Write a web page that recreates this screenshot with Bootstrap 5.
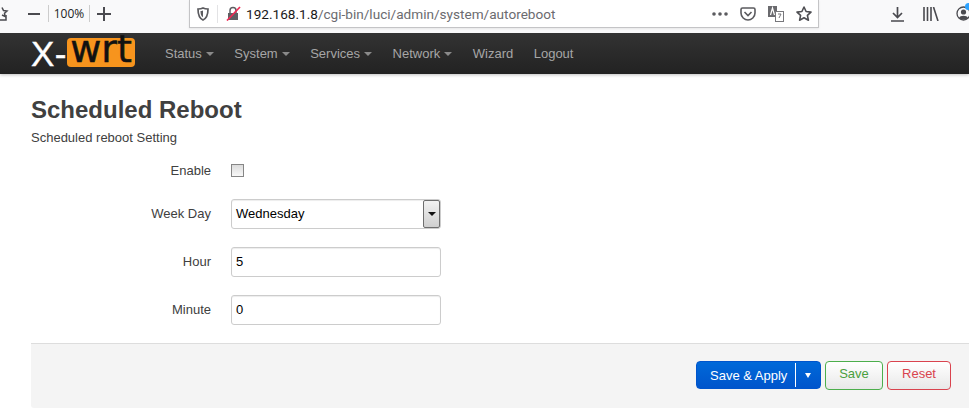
<!DOCTYPE html>
<html lang="en"><head><meta charset="utf-8"><title>Scheduled Reboot</title>
<link href="https://cdn.jsdelivr.net/npm/bootstrap@5.3.0/dist/css/bootstrap.min.css" rel="stylesheet">
<style>
html,body{height:413px;overflow:hidden;background:#fff}
body{font-family:"Liberation Sans",Arial,sans-serif;font-size:13px;color:#404040}
.chrome{height:33px;background:#f9f9fa;position:relative;overflow:visible}
.zoomset{width:189px;padding-left:28px;height:27px;position:relative}
.homeico{position:absolute;left:-3px;top:6px}
.ico{display:block;flex:none;color:#4a4a4f}
.zoomval{font:12px "Open Sans",sans-serif;color:#222;width:42px;height:17px;margin:0 7px 0 8px;text-align:center;line-height:17px;border-left:1px solid #ccc;border-right:1px solid #ccc}
.urlbar{width:630px;height:28px;background:#fff;border:1px solid #c4c4c6;border-top:0;box-shadow:0 1px 2px rgba(0,0,0,.08);padding-left:7px}
.vsep{width:1px;height:18px;background:#e3e3e5;margin:0 8px}
.urltext{font:13.6px Roboto,sans-serif;color:#6b6b6f;white-space:nowrap;margin-left:5px;line-height:28px}
.urltext b{font-weight:400;color:#1a1a1a}
.urltools{margin-right:6px}
.toolside{width:150px;padding-left:72px;height:27px;position:relative}
.notice{position:absolute;right:-3px;top:3px;width:7px;height:7px;border-radius:50%;background:#2ea3ff}
.topbar{height:41px;background:linear-gradient(#333,#222);box-shadow:0 1px 3px rgba(0,0,0,.25);padding-left:31px}
.brandx{font:35px/41px "Liberation Sans",sans-serif;color:#fff;width:36px;white-space:nowrap;-webkit-text-stroke:.4px #fff;letter-spacing:.5px}
.brandw{font:38px/22px "DejaVu Sans",sans-serif;color:#111;background:#f7941d;border-radius:4px;width:68px;height:29px;text-align:center;margin-top:5px;-webkit-text-stroke:.5px #111}
.menu{list-style:none;margin:0 0 0 30px;padding:0;gap:20.5px}
.menu a{color:#a6a6a6;text-decoration:none;font-size:13px;line-height:41px;white-space:nowrap}
.caretx{display:inline-block;width:0;height:0;border:4px solid transparent;border-top-color:#8a8a8a;border-bottom:0;margin-left:4px;vertical-align:2px}
.pagewrap{padding:0 0 0 31px}
.pagetitle{font-size:24px;line-height:30px;font-weight:700;margin:21px 0 0;color:#404040}
.pagedesc{font-size:13px;line-height:18px;margin:4px 0 0}
.frow{display:flex;align-items:center}
.flabel{width:180px;text-align:right;font-size:13px;line-height:18px;margin-bottom:0;color:#404040}
.fctl{margin-left:20px;width:210px}
.r1{height:20px;margin-top:13px}
.r1 .flabel{padding-top:1px}
.r2{margin-top:19px}
.r3,.r4{margin-top:18px}
.chk{width:13px;height:13px;border:1px solid #868686;background:linear-gradient(#dcdcdc,#f8f8f8);display:block;appearance:none}
.inp{display:block;width:210px;height:30px;border:1px solid #ccc;border-radius:3px;padding:0 4px 1px;font:13px "Liberation Sans",sans-serif;color:#000;box-shadow:inset 0 1px 1px rgba(0,0,0,.075);background:#fff;outline:0}
.selbox{width:210px;height:30px;border:1px solid #ccc;border-radius:3px;padding-left:4px;color:#000;box-shadow:inset 0 1px 1px rgba(0,0,0,.075);background:#fff}
.selarrow{width:17px;height:28px;background:linear-gradient(#f2f2f2,#cfcfcf);border:1px solid #6e6e6e;border-radius:2px}
.selarrow i{display:block;width:0;height:0;border:4px solid transparent;border-top-color:#111;border-bottom:0}
.footbar{margin-top:18px;height:65px;background:#f4f4f4;border-top:1px solid #ddd;border-radius:0 0 0 3px;padding:17px 18px 0 0}
.acts{gap:4px}
.bt-apply{height:28px;background:linear-gradient(#0069d9,#0055cc);border:1px solid #0055cc;color:#fff;border-radius:4px;width:125px;font-size:13px;padding:0}
.bt-apply span{display:block;line-height:26px}
.bt-main{width:99px;padding:1px 0 0 13px;text-align:left;border-right:1px solid #fff;height:24px;line-height:24px!important;white-space:nowrap}
.bt-drop{flex:1}
.bt-drop i{display:block;width:0;height:0;border:3.5px solid transparent;border-top:5px solid #fff;border-bottom:0}
.bt-ghost{height:29px;background:linear-gradient(#fff,#e8e8e8);border-radius:4px;font-size:13px;padding:0 0 3px;line-height:22px}
.bt-s{width:58px;border:1px solid #4cae4c;color:#4a9f3f}
.bt-r{width:64px;border:1px solid #d9434e;color:#d9434e}
.g12{margin-left:12px}
.gstar{margin:0 0 0 12px}
.g18{margin-left:19px}
.g17{margin-left:17px}
</style></head>
<body>
<div class="chrome d-flex align-items-start">
  <div class="zoomset d-flex align-items-center">
    <svg class="ico homeico" width="12" height="16" viewBox="0 0 12 16" fill="none" stroke="#4a4a4f" stroke-width="1.5"><path d="M5 1.500l1.500 3 3.500.5-2.500 2.300.6 3.200L5 9"/><path d="M0 14h9V9"/></svg>
    <svg class="ico" width="12" height="2" viewBox="0 0 12 2"><rect width="12" height="2" fill="#4a4a4f"/></svg>
    <div class="zoomval">100%</div>
    <svg class="ico" width="14" height="14" viewBox="0 0 14 14"><path d="M7 0v14M0 7h14" stroke="#4a4a4f" stroke-width="2"/></svg>
  </div>
  <div class="urlbar d-flex align-items-center">
    <svg class="ico" width="12" height="14" viewBox="0 0 12 14"><path d="M6 1C4 2 2.500 2 1 2c0 5 .5 9 5 11 4.500-2 5-6 5-11-1.500 0-3 0-5-1z" fill="none" stroke="#5b5b5f" stroke-width="1.700"/><path d="M6 3.500c-1 .5-1.800.5-2.500.5 0 3 .4 5 2.500 6.300z" fill="#5b5b5f"/></svg>
    <div class="vsep"></div>
    <svg class="ico" width="15" height="15" viewBox="0 0 15 15"><path d="M2 7h10v7H2z" fill="#5f5f63"/><path d="M4 7V4.500a3 3 0 0 1 6 0V7" fill="none" stroke="#5f5f63" stroke-width="1.500"/><path d="M1 14.500L14 1" stroke="#ef2b55" stroke-width="1.700"/></svg>
    <div class="urltext"><b>192.168.1.8</b>/cgi-bin/luci/admin/system/autoreboot</div>
    <div class="ms-auto d-flex align-items-center urltools">
      <svg class="ico" width="16" height="4" viewBox="0 0 16 4"><g fill="#5b5b5f"><circle cx="2" cy="2" r="1.800"/><circle cx="8" cy="2" r="1.800"/><circle cx="14" cy="2" r="1.800"/></g></svg>
      <svg class="ico g12" width="16" height="14" viewBox="0 0 16 14"><path d="M1 2.500C1 1.500 1.700 1 2.500 1h11c.8 0 1.500.5 1.500 1.500V6c0 4-3.500 7-7 7S1 10 1 6z" fill="none" stroke="#5b5b5f" stroke-width="1.600"/><path d="M4.500 5L8 8.500 11.500 5" fill="none" stroke="#5b5b5f" stroke-width="1.600"/></svg>
      <svg class="ico g12" width="16" height="16" viewBox="0 0 16 16"><rect x="0" y="0" width="9" height="11" fill="#6a6a6e"/><rect x="7.500" y="5.500" width="8" height="10" fill="#fff" stroke="#77777b"/><path d="M2.500 9l2-7 2 7" fill="none" stroke="#fff" stroke-width="1.200"/><path d="M10 8h3l-2 4" fill="none" stroke="#77777b"/></svg>
      <svg class="ico gstar" width="16" height="15" viewBox="0 0 16 15"><path d="M8 1l2.100 4.500 4.900.6-3.600 3.300 1 4.800L8 11.800l-4.400 2.400 1-4.800L1 6.100l4.900-.6z" fill="none" stroke="#4f4f53" stroke-width="1.600" stroke-linejoin="round"/></svg>
    </div>
  </div>
  <div class="toolside d-flex align-items-center">
    <svg class="ico" width="13" height="16" viewBox="0 0 13 16"><path d="M6.500 1v10M2 7l4.500 4.500L11 7M0 15h13" fill="none" stroke="#4a4a4f" stroke-width="1.700"/></svg>
    <svg class="ico g18" width="16" height="14" viewBox="0 0 16 14"><path d="M1 0v14M4.500 0v14M8 0v14M10.500 0L15 14" stroke="#4a4a4f" stroke-width="1.600" fill="none"/></svg>
    <svg class="ico g17" width="15" height="15" viewBox="0 0 15 15"><circle cx="7.500" cy="7.500" r="6.500" fill="none" stroke="#4a4a4f" stroke-width="1.300"/><circle cx="7.500" cy="6" r="2.600" fill="#4a4a4f"/><path d="M3 12c1-3 8-3 9 0-2 2-7 2-9 0z" fill="#4a4a4f"/></svg>
    <div class="notice"></div>
  </div>
</div>
<nav class="topbar d-flex">
  <div class="brandx">X-</div>
  <div class="brandw align-self-start">wrt</div>
  <ul class="menu d-flex">
    <li><a href="#">Status<span class="caretx"></span></a></li>
    <li><a href="#">System<span class="caretx"></span></a></li>
    <li><a href="#">Services<span class="caretx"></span></a></li>
    <li><a href="#">Network<span class="caretx"></span></a></li>
    <li><a href="#">Wizard</a></li>
    <li><a href="#">Logout</a></li>
  </ul>
</nav>
<main class="pagewrap">
  <h2 class="pagetitle">Scheduled Reboot</h2>
  <p class="pagedesc">Scheduled reboot Setting</p>
  <form>
    <div class="frow r1"><label class="flabel" for="f1">Enable</label><div class="fctl"><input id="f1" class="chk" type="checkbox"></div></div>
    <div class="frow r2"><label class="flabel">Week Day</label><div class="fctl"><div class="selbox d-flex align-items-center justify-content-between"><span>Wednesday</span><span class="selarrow d-flex align-items-center justify-content-center"><i></i></span></div></div></div>
    <div class="frow r3"><label class="flabel" for="f3">Hour</label><div class="fctl"><input id="f3" class="inp" value="5"></div></div>
    <div class="frow r4"><label class="flabel" for="f4">Minute</label><div class="fctl"><input id="f4" class="inp" value="0"></div></div>
    <div class="footbar d-flex justify-content-end">
      <div class="acts d-flex align-items-start">
        <div class="bt-apply d-flex align-items-center"><span class="bt-main">Save &amp; Apply</span><span class="bt-drop d-flex justify-content-center"><i></i></span></div>
        <button type="button" class="bt-ghost bt-s">Save</button>
        <button type="button" class="bt-ghost bt-r">Reset</button>
      </div>
    </div>
  </form>
</main>
</body></html>
